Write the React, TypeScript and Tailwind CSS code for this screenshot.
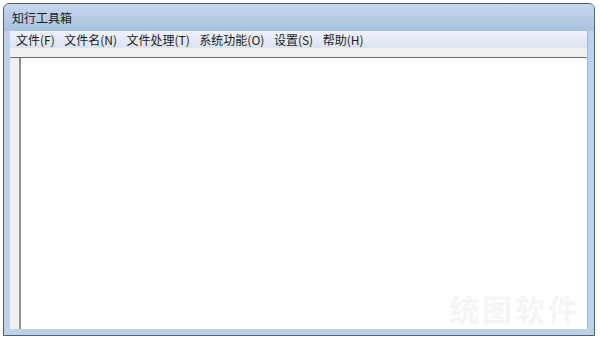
const menus = ["文件(F)", "文件名(N)", "文件处理(T)", "系统功能(O)", "设置(S)", "帮助(H)"]

export default function App() {
    return (
        <div
            className="w-[600px] h-[341px] bg-white pt-[3px] pl-[3px] pr-[5px] pb-[5px] overflow-hidden"
            style={{ fontFamily: '"Microsoft YaHei", "Noto Sans CJK SC", sans-serif' }}
        >
            <div className="h-full flex flex-col border border-[#52606f] rounded-t-[6px] bg-[#bcd2ea] overflow-hidden">
                {/* title bar */}
                <div className="h-[27px] shrink-0 flex items-center pl-[8px] text-[12px] text-[#1b1b1b] bg-gradient-to-b from-[#c6d7ec] to-[#a9c2df]">
                    知行工具箱
                </div>

                {/* client */}
                <div className="flex-1 flex flex-col mx-[6px] mb-[6px] bg-[#f0f0f0] border-r border-[#9fb9d8]">
                    <div className="h-[17px] shrink-0 flex items-center gap-[9.5px] pl-[6px] text-[12px] text-[#1b1b1b] bg-gradient-to-b from-[#eef2fa] to-[#dbe2f1]">
                        {menus.map((m) => (
                            <span key={m}>{m}</span>
                        ))}
                    </div>
                    <div className="h-[10px] shrink-0 border-b border-[#6f6f6f]" />
                    <div className="flex-1 flex pl-[9px]">
                        <div className="flex-1 relative bg-white border-l-2 border-[#8e8e8e]">
                            <div className="absolute right-[6px] bottom-[6px] text-[30px] font-bold leading-none text-[#f5f5f5] tracking-[3px]">
                                统图软件
                            </div>
                        </div>
                    </div>
                </div>
            </div>
        </div>
    )
}
